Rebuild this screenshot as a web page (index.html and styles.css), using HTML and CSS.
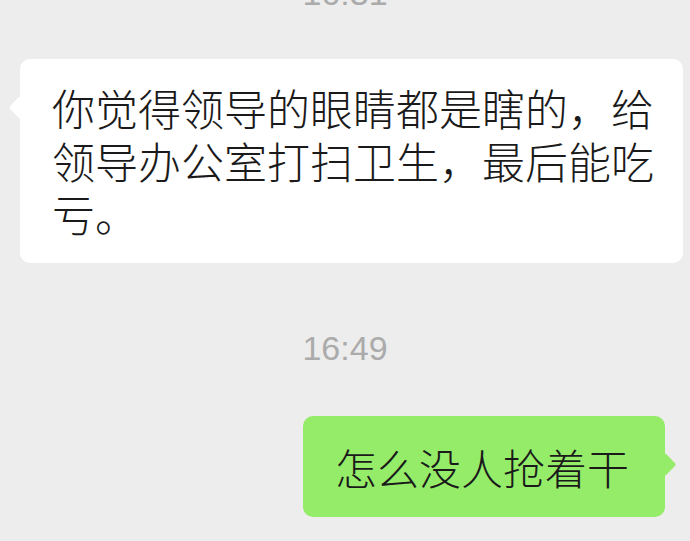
FILE: index.html
```html
<!DOCTYPE html>
<html lang="zh-CN">
<head>
  <meta charset="utf-8">
  <title>Chat</title>
  <link rel="stylesheet" href="styles.css">
</head>
<body>
  <div class="chat">
    <div class="time time-cut">16:31</div>

    <div class="msg msg-left">
      <div class="bubble bubble-white">你觉得领导的眼睛都是瞎的，给领导办公室打扫卫生，最后能吃亏。</div>
    </div>

    <div class="time">16:49</div>

    <div class="msg msg-right">
      <div class="bubble bubble-green">怎么没人抢着干</div>
    </div>
  </div>
</body>
</html>
```

FILE: styles.css
```css
body {
  margin: 0;
  background: #ededed;
  font-family: "Noto Sans CJK SC", "Noto Sans", sans-serif;
  overflow: hidden;
}

.chat {
  display: flex;
  flex-direction: column;
}

.time {
  font-family: "Liberation Sans", Arial, sans-serif;
  font-size: 34px;
  line-height: 40px;
  color: #ababab;
  text-align: center;
}

.time-cut {
  margin-top: -27px;
  margin-bottom: 46px;
}

.msg {
  display: flex;
}

.msg-left {
  justify-content: flex-start;
  padding-left: 20px;
  padding-right: 7px;
  margin-bottom: 65px;
}

.msg-right {
  justify-content: flex-end;
  padding-right: 25px;
  margin-top: 48px;
}

.bubble {
  position: relative;
  line-height: 53px;
  color: #1a1a1a;
  font-weight: 300;
  border-radius: 10px;
}

.bubble::before {
  content: "";
  position: absolute;
  top: 40px;
  width: 17px;
  height: 17px;
  border-radius: 3px;
  transform: rotate(45deg);
}

.bubble-white {
  flex: 1;
  font-size: 43px;
  background: #fff;
  padding: 22px 28px 23px 32px;
}

.bubble-white::before {
  left: -8px;
  background: #fff;
}

.bubble-green {
  font-size: 42px;
  background: #95ec69;
  padding: 24px 36px 24px 32px;
}

.bubble-green::before {
  right: -8px;
  background: #95ec69;
}
```
